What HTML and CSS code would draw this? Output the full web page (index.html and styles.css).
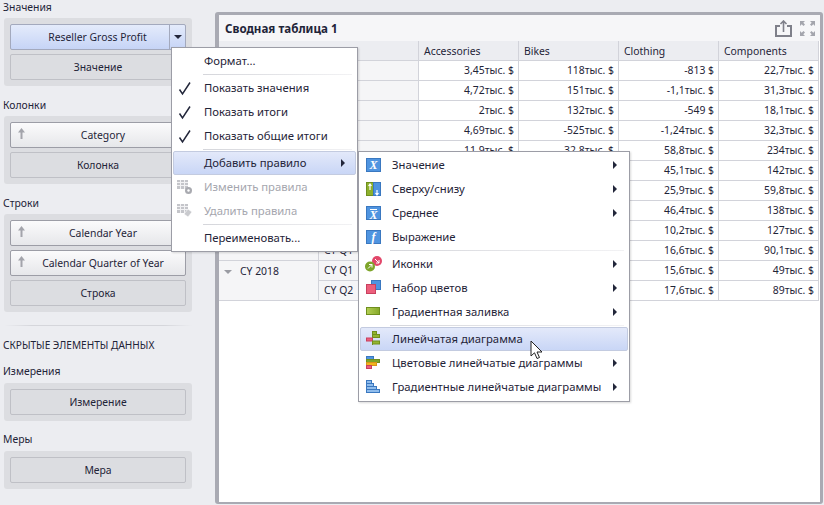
FILE: index.html
```html
<!DOCTYPE html>
<html lang="ru">
<head>
    <meta charset="UTF-8">
    <title>Сводная таблица</title>
    <link rel="stylesheet" href="styles.css">
</head>
<body>
    <div class="page">
        <!-- Data items pane -->
        <div class="pane">
            <div class="label first">Значения</div>
            <div class="group">
                <div class="split">
                    <div class="item hot">Reseller Gross Profit</div>
                    <div class="drop"><span class="drop-arrow"></span></div>
                </div>
                <div class="item empty">Значение</div>
            </div>

            <div class="label">Колонки</div>
            <div class="group">
                <div class="item sorted"><svg class="sort" width="9" height="11" viewBox="0 0 9 11"><path fill="#a3a4ab" d="M4.500 0L8 4.500H5.500V11h-2V4.500H1z"/></svg>Category</div>
                <div class="item empty">Колонка</div>
            </div>

            <div class="label">Строки</div>
            <div class="group">
                <div class="item sorted"><svg class="sort" width="9" height="11" viewBox="0 0 9 11"><path fill="#a3a4ab" d="M4.500 0L8 4.500H5.500V11h-2V4.500H1z"/></svg>Calendar Year</div>
                <div class="item sorted"><svg class="sort" width="9" height="11" viewBox="0 0 9 11"><path fill="#a3a4ab" d="M4.500 0L8 4.500H5.500V11h-2V4.500H1z"/></svg>Calendar Quarter of Year</div>
                <div class="item empty">Строка</div>
            </div>

            <div class="divider"></div>
            <div class="hidden-title">СКРЫТЫЕ ЭЛЕМЕНТЫ ДАННЫХ</div>

            <div class="label sub">Измерения</div>
            <div class="group">
                <div class="item empty">Измерение</div>
            </div>

            <div class="label sub">Меры</div>
            <div class="group">
                <div class="item empty">Мера</div>
            </div>
        </div>

        <!-- Pivot card -->
        <div class="card">
            <div class="card-head">
                <span class="card-title">Сводная таблица 1</span>
                <svg class="tool" width="17" height="17" viewBox="0 0 17 17" fill="none" stroke="#7f808a" stroke-width="2">
                    <path d="M5 6H1v10h15V6h-4"/>
                    <path d="M8.500 12V1M5.500 4l3-3 3 3" stroke-width="1.600"/>
                </svg>
                <svg class="tool" width="15" height="15" viewBox="0 0 15 15" fill="#a4a5ad">
                    <path d="M0 0h5L3.300 1.700 5 3.500 3.500 5 1.700 3.300 0 5zM15 0v5l-1.700-1.700L11.500 5 10 3.500l1.700-1.800L10 0zM0 15v-5l1.700 1.700L3.500 10 5 11.500l-1.700 1.800L5 15zM15 15h-5l1.700-1.700L10 11.500l1.500-1.500 1.800 1.700L15 10z"/>
                </svg>
            </div>
            <div class="pivot">
                <div class="cell head wide"></div>
                <div class="cell head">Accessories</div>
                <div class="cell head">Bikes</div>
                <div class="cell head">Clothing</div>
                <div class="cell head">Components</div>

                <div class="cell side wide"></div>
                <div class="cell num">3,45тыс. $</div><div class="cell num">118тыс. $</div><div class="cell num">-813 $</div><div class="cell num">22,7тыс. $</div>
                <div class="cell side wide"></div>
                <div class="cell num">4,72тыс. $</div><div class="cell num">151тыс. $</div><div class="cell num">-1,1тыс. $</div><div class="cell num">31,3тыс. $</div>
                <div class="cell side wide"></div>
                <div class="cell num">2тыс. $</div><div class="cell num">132тыс. $</div><div class="cell num">-549 $</div><div class="cell num">18,1тыс. $</div>
                <div class="cell side wide"></div>
                <div class="cell num">4,69тыс. $</div><div class="cell num">-525тыс. $</div><div class="cell num">-1,24тыс. $</div><div class="cell num">32,3тыс. $</div>
                <div class="cell side wide"></div>
                <div class="cell num">11,9тыс. $</div><div class="cell num">32,8тыс. $</div><div class="cell num">58,8тыс. $</div><div class="cell num">234тыс. $</div>
                <div class="cell side wide"></div>
                <div class="cell num"></div><div class="cell num"></div><div class="cell num">45,1тыс. $</div><div class="cell num">142тыс. $</div>
                <div class="cell side wide"></div>
                <div class="cell num"></div><div class="cell num"></div><div class="cell num">25,9тыс. $</div><div class="cell num">59,8тыс. $</div>
                <div class="cell side wide"></div>
                <div class="cell num"></div><div class="cell num"></div><div class="cell num">46,4тыс. $</div><div class="cell num">138тыс. $</div>
                <div class="cell side wide"></div>
                <div class="cell num"></div><div class="cell num"></div><div class="cell num">10,2тыс. $</div><div class="cell num">127тыс. $</div>
                <div class="cell side"></div><div class="cell side">CY Q1</div>
                <div class="cell num"></div><div class="cell num"></div><div class="cell num">16,6тыс. $</div><div class="cell num">90,1тыс. $</div>
                <div class="cell side year"><span class="tri"></span>CY 2018</div><div class="cell side">CY Q1</div>
                <div class="cell num"></div><div class="cell num"></div><div class="cell num">15,6тыс. $</div><div class="cell num">49тыс. $</div>
                <div class="cell side">CY Q2</div>
                <div class="cell num"></div><div class="cell num"></div><div class="cell num">17,6тыс. $</div><div class="cell num">89тыс. $</div>
            </div>
        </div>

        <!-- Context menu -->
        <div class="menu main-menu">
            <div class="row">Формат...</div>
            <div class="sep"></div>
            <div class="row"><span class="ic"><svg width="16" height="16" viewBox="0 0 16 16" fill="none" stroke="#22263a" stroke-width="1.500"><path d="M2.500 8.500l3 4.500L13 1.500"/></svg></span>Показать значения</div>
            <div class="row"><span class="ic"><svg width="16" height="16" viewBox="0 0 16 16" fill="none" stroke="#22263a" stroke-width="1.500"><path d="M2.500 8.500l3 4.500L13 1.500"/></svg></span>Показать итоги</div>
            <div class="row"><span class="ic"><svg width="16" height="16" viewBox="0 0 16 16" fill="none" stroke="#22263a" stroke-width="1.500"><path d="M2.500 8.500l3 4.500L13 1.500"/></svg></span>Показать общие итоги</div>
            <div class="sep"></div>
            <div class="row on">Добавить правило<span class="more"></span></div>
            <div class="row off"><span class="ic"><svg width="16" height="16" viewBox="0 0 16 16"><path fill="#c4c5ca" d="M0 0h11v9H0z"/><path stroke="#f2f2f4" d="M0 2.500h11M0 5.500h11M3.500 0v9M7.500 0v9"/><circle cx="11.500" cy="10.500" r="3.500" fill="#a9aab0"/><circle cx="11.500" cy="10.500" r="1.200" fill="#fff"/></svg></span>Изменить правила</div>
            <div class="row off"><span class="ic"><svg width="16" height="16" viewBox="0 0 16 16"><path fill="#c4c5ca" d="M0 0h11v9H0z"/><path stroke="#f2f2f4" d="M0 2.500h11M0 5.500h11M3.500 0v9M7.500 0v9"/><path fill="#c9cace" stroke="#fff" stroke-width=".6" d="M11 5l4 3-4 5-4-3z"/></svg></span>Удалить правила</div>
            <div class="sep"></div>
            <div class="row">Переименовать...</div>
        </div>

        <!-- Add rule submenu -->
        <div class="menu sub-menu">
            <div class="row"><span class="ic"><svg width="16" height="16" viewBox="0 0 16 16"><rect x=".5" y="1.500" width="14" height="13" fill="#4f94e0" stroke="#3a78c0"/><text x="7.500" y="12" class="glyph">X</text></svg></span>Значение<span class="more"></span></div>
            <div class="row"><span class="ic"><svg width="16" height="16" viewBox="0 0 16 16"><rect x=".5" y="1.500" width="7" height="13" fill="#8db02c" stroke="#6f8f1e"/><rect x="7.500" y="1.500" width="7" height="13" fill="#4f94e0" stroke="#3a78c0"/><path stroke="#fff" stroke-width="1.200" d="M4 9V3M11 14V9M2.500 5L4 3l1.500 2M9.500 12l1.500 2 1.500-2" fill="none"/></svg></span>Сверху/снизу<span class="more"></span></div>
            <div class="row"><span class="ic"><svg width="16" height="16" viewBox="0 0 16 16"><rect x=".5" y="1.500" width="14" height="13" fill="#4f94e0" stroke="#3a78c0"/><path stroke="#fff" d="M4 4.500h7"/><text x="7.500" y="13.500" class="glyph">X</text></svg></span>Среднее<span class="more"></span></div>
            <div class="row"><span class="ic"><svg width="16" height="16" viewBox="0 0 16 16"><rect x=".5" y="1.500" width="14" height="13" fill="#4f94e0" stroke="#3a78c0"/><text x="7.500" y="12" class="glyph">f</text></svg></span>Выражение</div>
            <div class="sep"></div>
            <div class="row"><span class="ic ic-wide"><svg width="18" height="16" viewBox="0 0 18 16"><circle cx="12" cy="5" r="5" fill="#e2476a"/><circle cx="5" cy="10.500" r="5" fill="#7ea52a"/><path stroke="#fff" fill="none" d="M3 12.500l4-4M4 8.500h3v3M10 3l4 4M11 7h3V4"/></svg></span>Иконки<span class="more"></span></div>
            <div class="row"><span class="ic"><svg width="16" height="16" viewBox="0 0 16 16"><rect x="5.500" y=".5" width="9" height="9" fill="#4f94e0" stroke="#3a78c0"/><rect x=".5" y="4.500" width="9" height="9" fill="#ec5f7c" stroke="#c9405e"/></svg></span>Набор цветов<span class="more"></span></div>
            <div class="row"><span class="ic"><svg width="16" height="16" viewBox="0 0 16 16"><defs><linearGradient id="gf"><stop offset="0" stop-color="#b4cf55"/><stop offset="1" stop-color="#86a92a"/></linearGradient></defs><rect x=".5" y="3.500" width="13" height="7" fill="url(#gf)" stroke="#6f8f1e"/></svg></span>Градиентная заливка<span class="more"></span></div>
            <div class="sep"></div>
            <div class="row on"><span class="ic"><svg width="16" height="16" viewBox="0 0 16 16"><path stroke="#6f8f1e" d="M6.500 0v14"/><rect x="6.500" y=".5" width="4" height="3" fill="#93b531" stroke="#6f8f1e"/><rect x="6.500" y="3.500" width="7" height="3" fill="#93b531" stroke="#6f8f1e"/><rect x=".5" y="7" width="6" height="3" fill="#ec5f7c" stroke="#c9405e"/><rect x="6.500" y="10" width="7" height="3" fill="#93b531" stroke="#6f8f1e"/></svg></span>Линейчатая диаграмма</div>
            <div class="row"><span class="ic"><svg width="16" height="16" viewBox="0 0 16 16"><rect x=".5" y="1.500" width="7" height="3" fill="#4f94e0" stroke="#3a78c0"/><rect x=".5" y="4.500" width="13" height="3" fill="#7ea52a" stroke="#6f8f1e"/><rect x=".5" y="7.500" width="10" height="3" fill="#f2b51d" stroke="#d8951a"/><rect x=".5" y="10.500" width="5" height="3" fill="#ec5f7c" stroke="#c9405e"/></svg></span>Цветовые линейчатые диаграммы<span class="more"></span></div>
            <div class="row"><span class="ic"><svg width="16" height="16" viewBox="0 0 16 16" fill="#8fbcec" stroke="#3a78c0"><rect x=".5" y="1.500" width="5" height="3"/><rect x=".5" y="4.500" width="7" height="3"/><rect x=".5" y="7.500" width="10" height="3"/><rect x=".5" y="10.500" width="13" height="3"/></svg></span>Градиентные линейчатые диаграммы<span class="more"></span></div>
        </div>

        <svg class="cursor" width="14" height="20" viewBox="0 0 14 20">
            <path d="M1 1v15l3.500-3.200L7 18.500l2.500-1-2.500-5.500h5z" fill="#fff" stroke="#222"/>
        </svg>
    </div>
</body>
</html>
```

FILE: styles.css
```css
html, body {
    margin: 0;
    padding: 0;
}

body {
    font-family: "Noto Sans", sans-serif;
    font-size: 10.4px;
    color: #1f2438;
}

.page {
    position: relative;
    display: flex;
    width: 824px;
    height: 505px;
    overflow: hidden;
    background-color: #ecedf1;
}

.pane {
    width: 215px;
    flex-shrink: 0;
    padding-left: 4px;
    box-sizing: border-box;
}

.label {
    height: 16px;
    line-height: 16px;
    margin: 11px 0 3px -1px;
}

.label.first {
    margin-top: -1px;
}

.group {
    width: 176px;
    padding: 6px;
    background-color: #dcdde1;
    border-radius: 3px;
    display: flex;
    flex-direction: column;
    gap: 4px;
}

.item {
    position: relative;
    flex: 1;
    height: 26px;
    box-sizing: border-box;
    line-height: 24px;
    text-align: center;
    border: 1px solid #9c9da6;
    border-radius: 2px;
    background: linear-gradient(#fbfbfc, #e6e7ea);
}

.item.sorted {
    padding-left: 10px;
}

.item.empty {
    border-color: #bfc0c6;
    background: #dcdde1;
}

.split {
    display: flex;
    height: 26px;
    border: 1px solid #a3a9bd;
    border-radius: 2px;
    box-sizing: border-box;
    background: linear-gradient(#e4ebfb, #c6d4f6);
}

.item.hot {
    height: 24px;
    border: none;
    background: none;
    padding-left: 15px;
}

.drop {
    width: 15px;
    border-left: 1px solid #a3a9bd;
    display: flex;
    align-items: center;
    justify-content: center;
}

.drop-arrow {
    border: 4px solid transparent;
    border-top-color: #22263a;
    border-bottom-width: 0;
}

.sort {
    position: absolute;
    left: 6px;
    top: 5px;
}

.divider {
    height: 1px;
    margin: 13px 0 0;
    width: 188px;
    background: linear-gradient(to right, #ecedf1, #d5d6db 15%, #d5d6db 85%, #ecedf1);
}

.hidden-title {
    margin: 11px 0 0 -1px;
    height: 16px;
    line-height: 16px;
    font-size: 10.100px;
}

.label.sub {
    margin: 10px 0 4px -1px;
}

.card {
    flex: 1;
    margin: 12px 1px 1px 0;
    border: 4px solid #a9aab3;
    border-width: 3px 3px 2px 4px;
    border-radius: 3px;
    background-color: #fff;
}

.card-head {
    display: flex;
    align-items: center;
    gap: 8px;
    height: 26px;
    padding: 0 5px 0 6px;
    background-color: #f6f6f8;
}

.card-title {
    flex: 1;
    font-size: 11.600px;
    font-weight: bold;
}

.tool {
    display: block;
}

.pivot {
    display: grid;
    grid-template-columns: 100px 100px 100px 100px 100px 100px;
    grid-auto-rows: 20px;
}

.cell {
    box-sizing: border-box;
    height: 20px;
    line-height: 19px;
    padding: 0 4px 0 5px;
    border-right: 1px solid #d2d3da;
    border-bottom: 1px solid #d2d3da;
    white-space: nowrap;
}

.wide {
    grid-column: span 2;
}

.head {
    line-height: 21px;
    background-color: #ecedf1;
}

.side {
    background-color: #f5f5f7;
}

.num {
    text-align: right;
}

.year {
    grid-row: span 2;
    height: 40px;
    padding-top: 1px;
    padding-left: 5px;
}

.tri {
    display: inline-block;
    vertical-align: 1px;
    margin-right: 8px;
    border: 4px solid transparent;
    border-top-color: #9a9ba3;
    border-bottom-width: 0;
}

.menu {
    position: absolute;
    box-sizing: border-box;
    padding: 1px;
    font-size: 11.300px;
    background-color: #fff;
    border: 1px solid #9c9da6;
    box-shadow: 1px 1px 2px rgba(0, 0, 0, 0.15);
}

.main-menu {
    left: 171px;
    top: 47px;
    width: 187px;
    height: 205px;
}

.sub-menu {
    left: 358px;
    top: 151px;
    width: 272px;
    height: 251px;
}

.row {
    position: relative;
    box-sizing: border-box;
    height: 24px;
    line-height: 22px;
    padding-left: 30px;
    border: 1px solid transparent;
    border-radius: 2px;
    white-space: nowrap;
}

.sub-menu .row {
    padding-left: 31px;
}

.row.on {
    border-color: #c3cbe0;
    background: linear-gradient(#e3e9fa, #c9d6f6);
}

.row.off {
    color: #a5a6ae;
}

.ic {
    position: absolute;
    left: 3px;
    top: 4px;
    line-height: 0;
}

.sub-menu .ic {
    left: 5px;
    top: 3px;
}

.sub-menu .ic-wide {
    left: 4px;
}

.more {
    position: absolute;
    right: 10px;
    top: 7px;
    border: 4px solid transparent;
    border-left-color: #22263a;
    border-right-width: 0;
}

.sep {
    height: 1px;
    margin: 1px 4px 1px 30px;
    background: linear-gradient(to right, #d5d6db, #f2f2f4);
}

.glyph {
    font-family: "Liberation Serif", serif;
    font-size: 12px;
    font-weight: bold;
    font-style: italic;
    fill: #fff;
    text-anchor: middle;
}

.cursor {
    position: absolute;
    left: 530px;
    top: 340px;
}
```
